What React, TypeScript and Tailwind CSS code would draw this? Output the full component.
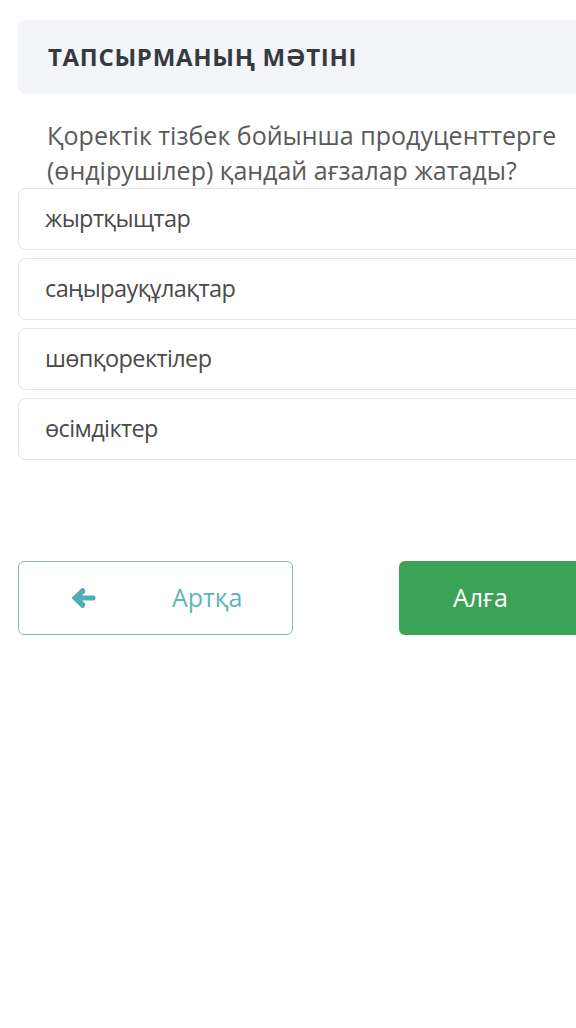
const options = ["жыртқыщтар", "саңырауқұлақтар", "шөпқоректілер", "өсімдіктер"];

function ArrowLeft({ className }: { className?: string }) {
  return (
    <svg viewBox="0 0 26 24" className={className} fill="currentColor">
      <path d="M1.5 12 L11 2.8 Q13 1 14.5 3 L15 4 Q16 6 14.3 7.6 L12 9.5 H23.5 Q25.5 9.5 25.5 11.5 V12.5 Q25.5 14.5 23.5 14.5 H12 L14.3 16.4 Q16 18 15 20 L14.5 21 Q13 23 11 21.2 Z" />
    </svg>
  );
}

function ArrowRight({ className }: { className?: string }) {
  return (
    <svg viewBox="0 0 26 24" className={className} fill="currentColor">
      <g transform="translate(26 0) scale(-1 1)">
        <path d="M1.5 12 L11 2.8 Q13 1 14.5 3 L15 4 Q16 6 14.3 7.6 L12 9.5 H23.5 Q25.5 9.5 25.5 11.5 V12.5 Q25.5 14.5 23.5 14.5 H12 L14.3 16.4 Q16 18 15 20 L14.5 21 Q13 23 11 21.2 Z" />
      </g>
    </svg>
  );
}

export default function App() {
  return (
    <div className="min-h-[1028px] w-full overflow-hidden bg-white font-['Open_Sans',sans-serif]">
      <div className="w-[720px] pl-[18px] pt-[20px]">
        <div className="flex h-[74px] items-center rounded-lg bg-[#f4f5f9] px-[30px]">
          <h2 className="text-[24px] font-bold tracking-[0.7px] text-[#343a40]">
            ТАПСЫРМАНЫҢ МӘТІНІ
          </h2>
        </div>

        <p className="mt-[24px] px-[29px] text-[25px] leading-[35px] text-[#5a5a5a]">
          Қоректік тізбек бойынша продуценттерге
          <br />
          (өндірушілер) қандай ағзалар жатады?
        </p>

        <div className="flex flex-col gap-2">
          {options.map((o) => (
            <div
              key={o}
              className="flex h-[62px] items-center rounded-lg border border-[#e3e4e6] bg-white pl-[26px] text-[23.5px] tracking-[-0.6px] text-[#4a4a4a]"
            >
              {o}
            </div>
          ))}
        </div>

        <div className="mt-[101px] flex gap-[106px]">
          <button className="flex h-[74px] w-[275px] items-center rounded-md border border-[#86b8b8] bg-white pl-[51px] text-[25px] text-[#5fb6b8]">
            <ArrowLeft className="h-[24px] w-[26px] text-[#4fb0b2]" />
            <span className="ml-[76px]">Артқа</span>
          </button>
          <button className="flex h-[74px] w-[275px] items-center rounded-md bg-[#3ba356] pl-[54px] text-[25px] text-white">
            <span>Алға</span>
            <ArrowRight className="ml-[88px] h-[24px] w-[26px]" />
          </button>
        </div>
      </div>
    </div>
  );
}
